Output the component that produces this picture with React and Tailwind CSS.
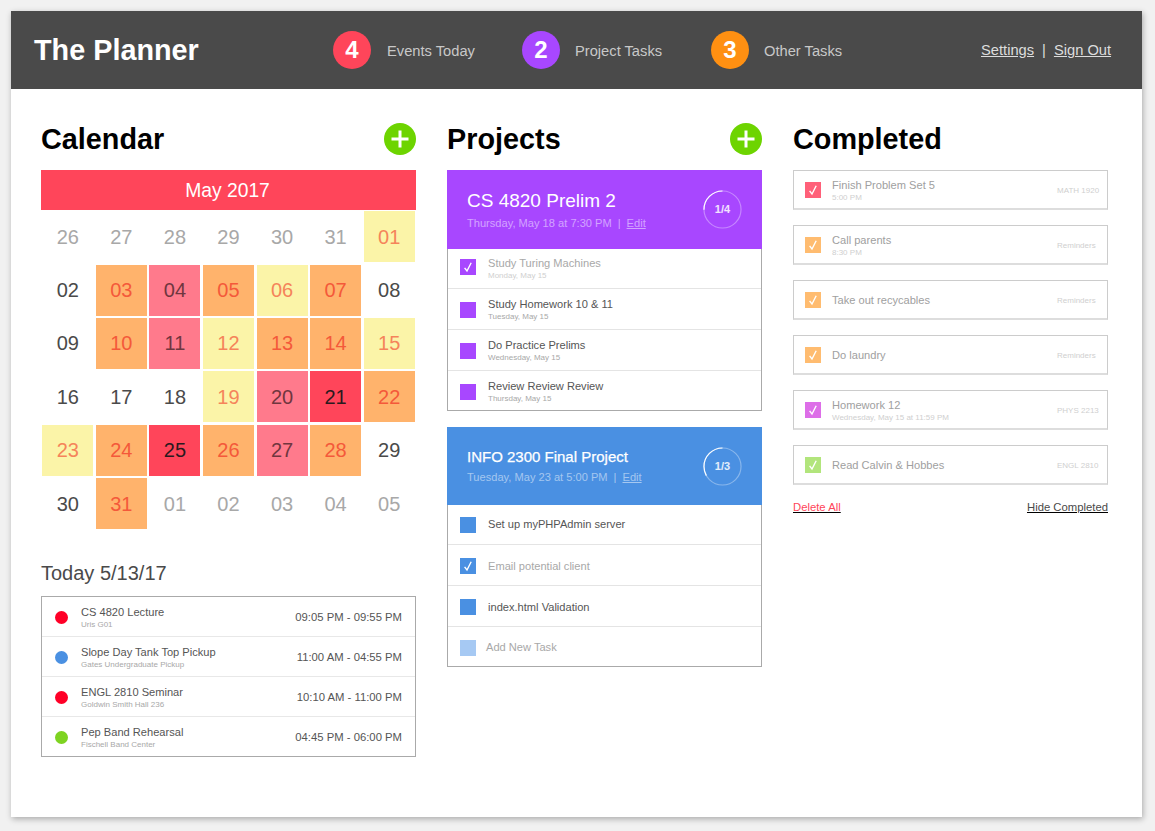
import React from "react";

const font = "font-['Liberation_Sans',Arial,sans-serif]";

const colors = {
    g: "text-[#a8a8a8]",
    n: "text-[#4a4a4a]",
    y: "bg-[#fbf4a8] text-[#f5845a]",
    o: "bg-[#ffb36c] text-[#f4593a]",
    p: "bg-[#ff7a8c] text-[#70363f]",
    r: "bg-[#ff455a] text-[#2b1a1e]",
};

const calendar = [
    ["26", "g"], ["27", "g"], ["28", "g"], ["29", "g"], ["30", "g"], ["31", "g"], ["01", "y"],
    ["02", "n"], ["03", "o"], ["04", "p"], ["05", "o"], ["06", "y"], ["07", "o"], ["08", "n"],
    ["09", "n"], ["10", "o"], ["11", "p"], ["12", "y"], ["13", "o"], ["14", "o"], ["15", "y"],
    ["16", "n"], ["17", "n"], ["18", "n"], ["19", "y"], ["20", "p"], ["21", "r"], ["22", "o"],
    ["23", "y"], ["24", "o"], ["25", "r"], ["26", "o"], ["27", "p"], ["28", "o"], ["29", "n"],
    ["30", "n"], ["31", "o"], ["01", "g"], ["02", "g"], ["03", "g"], ["04", "g"], ["05", "g"],
];

const events = [
    { title: "CS 4820 Lecture", place: "Uris G01", time: "09:05 PM - 09:55 PM", dot: "bg-[#ff0027]" },
    { title: "Slope Day Tank Top Pickup", place: "Gates Undergraduate Pickup", time: "11:00 AM - 04:55 PM", dot: "bg-[#4a90e2]" },
    { title: "ENGL 2810 Seminar", place: "Goldwin Smith Hall 236", time: "10:10 AM - 11:00 PM", dot: "bg-[#ff0027]" },
    { title: "Pep Band Rehearsal", place: "Fischell Band Center", time: "04:45 PM - 06:00 PM", dot: "bg-[#7ed321]" },
];

const completed = [
    { title: "Finish Problem Set 5", sub: "5:00 PM", tag: "MATH 1920", color: "bg-[#ff6079]" },
    { title: "Call parents", sub: "8:30 PM", tag: "Reminders", color: "bg-[#ffbc70]" },
    { title: "Take out recycables", tag: "Reminders", color: "bg-[#ffbc70]" },
    { title: "Do laundry", tag: "Reminders", color: "bg-[#ffbc70]" },
    { title: "Homework 12", sub: "Wednesday, May 15 at 11:59 PM", tag: "PHYS 2213", color: "bg-[#dd6ee8]" },
    { title: "Read Calvin & Hobbes", tag: "ENGL 2810", color: "bg-[#b2e57c]" },
];

function Check({ color, checked, className = "" }) {
    return (
        <div className={`flex h-4 w-4 shrink-0 items-center justify-center ${color} ${className}`}>
            {checked && (
                <svg width="16" height="16" viewBox="0 0 16 16" fill="none">
                    <path d="M4.6 8.8 L7 12 L11.2 3.8" stroke="white" strokeWidth="1.4" />
                </svg>
            )}
        </div>
    );
}

function Badge({ n, color, label, className }) {
    return (
        <div className={`flex items-center ${className}`}>
            <div className={`flex h-[38px] w-[38px] items-center justify-center rounded-full text-[24px] font-bold text-white ${color}`}>{n}</div>
            <span className="pt-[3px] text-[14.7px] text-[#c8c8c8]">{label}</span>
        </div>
    );
}

function PlusButton() {
    return (
        <div className="flex h-8 w-8 items-center justify-center rounded-full bg-[#6dd400]">
            <svg width="20" height="20" viewBox="0 0 20 20">
                <path d="M10 1.5 V18.5 M1.5 10 H18.5" stroke="white" strokeWidth="3" />
            </svg>
        </div>
    );
}

function Ring({ text, progress }) {
    const c = 2 * Math.PI * 19;
    return (
        <div className="relative h-[39px] w-[39px]">
            <svg width="39" height="39" viewBox="0 0 40 40" className="absolute inset-0">
                <circle cx="20" cy="20" r="19" fill="none" stroke="white" strokeOpacity="0.35" strokeWidth="1.2" />
                <circle cx="20" cy="20" r="19" fill="none" stroke="white" strokeWidth="1.2"
                    strokeDasharray={`${c * progress} ${c}`} transform="rotate(-90 20 20) scale(1 -1) translate(0 -40)" />
            </svg>
            <div className="flex h-full items-center justify-center text-[11px] font-bold text-white/85">{text}</div>
        </div>
    );
}

function ProjectCard({ title, titleClass, date, ring, progress, color, headerClass, children }) {
    return (
        <div className="border-x border-b border-[#aaaaaa]">
            <div className={`-mx-px flex items-center justify-between px-5 ${color} ${headerClass}`}>
                <div>
                    <div className={`text-white ${titleClass}`}>{title}</div>
                    <div className="mt-1 text-[11.1px] leading-[14px] text-white/50">
                        {date}<span className="mx-[6px]">|</span><span className="underline">Edit</span>
                    </div>
                </div>
                <Ring text={ring} progress={progress} />
            </div>
            {children}
        </div>
    );
}

function TaskRow({ color, title, sub, checked, top, last, checkClass }) {
    const size = top ? "h-10 border-b" : last ? "h-[39px] pt-[2px]" : "h-[41px] pt-[2px] border-b";
    return (
        <div className={`flex items-center gap-3 border-[#e4e4e4] pl-3 ${size}`}>
            <Check color={color} checked={checked} className={checkClass} />
            <div>
                <div className={`text-[11.1px] leading-[13px] ${checked ? "text-[#a8a8a8]" : "text-[#555555]"}`}>{title}</div>
                {sub && <div className={`mt-px text-[8px] leading-[10px] ${checked ? "text-[#cfcfcf]" : "text-[#a8a8a8]"}`}>{sub}</div>}
            </div>
        </div>
    );
}

export default function App() {
    return (
        <div className={`min-h-[831px] bg-[#f1f1f1] pl-[11px] pt-[11px] ${font}`}>
            <div className="h-[806px] w-[1131px] bg-white shadow-[1px_2px_6px_rgba(0,0,0,0.3)]">
                <header className="flex h-[78px] items-center bg-[#4a4a4a] pl-[23px] text-white">
                    <h1 className="w-[299px] pt-[2px] text-[28.8px] font-bold">The Planner</h1>
                    <Badge n="4" color="bg-[#ff455a]" label="Events Today" className="w-[189px] gap-4" />
                    <Badge n="2" color="bg-[#a847ff]" label="Project Tasks" className="w-[189px] gap-[15px]" />
                    <Badge n="3" color="bg-[#ff9012]" label="Other Tasks" className="w-[270px] gap-[15px]" />
                    <div className="pt-px text-[14.7px] text-[#dddddd]">
                        <span className="underline">Settings</span>
                        <span className="mx-[8px] font-light">|</span>
                        <span className="underline">Sign Out</span>
                    </div>
                </header>

                <main className="flex gap-[31px] pl-[30px] pt-[34px]">
                    <section className="w-[375px]">
                        <div className="flex h-[47px] items-start justify-between">
                            <h2 className="text-[28.8px] font-bold leading-[33px] text-black">Calendar</h2>
                            <PlusButton />
                        </div>
                        <div className="flex h-10 items-center justify-center bg-[#ff455a] pr-[2px] pt-[2px] text-[19.3px] text-white">May 2017</div>
                        <div className="grid grid-cols-7 grid-rows-[repeat(6,53.4px)]">
                            {calendar.map(([day, kind], i) => (
                                <div key={i} className={`m-[1.25px] flex items-center justify-center text-[20px] ${colors[kind]}`}>{day}</div>
                            ))}
                        </div>
                        <h3 className="mt-[31px] text-[20px] leading-[24px] text-[#4a4a4a]">Today 5/13/17</h3>
                        <div className="mt-[11px] border border-[#aaaaaa]">
                            {events.map((e, i) => (
                                <div key={i} className={`flex items-center px-[13px] pt-px ${i < 3 ? "h-10 border-b border-[#e8e8e8]" : "h-[39px]"}`}>
                                    <div className={`h-[13px] w-[13px] rounded-full ${e.dot}`} />
                                    <div className="ml-[13px] pt-[2px]">
                                        <div className="text-[11.1px] leading-[13px] text-[#555555]">{e.title}</div>
                                        <div className="mt-px text-[8px] leading-[10px] text-[#a8a8a8]">{e.place}</div>
                                    </div>
                                    <div className="ml-auto text-[11.3px] text-[#555555]">{e.time}</div>
                                </div>
                            ))}
                        </div>
                    </section>

                    <section className="w-[315px]">
                        <div className="flex h-[47px] items-start justify-between">
                            <h2 className="text-[28.8px] font-bold leading-[33px] text-black">Projects</h2>
                            <PlusButton />
                        </div>
                        <ProjectCard title="CS 4820 Prelim 2" titleClass="text-[19px] leading-[22px]" date="Thursday, May 18 at 7:30 PM" ring="1/4" progress={0.25} color="bg-[#a847ff]" headerClass="h-[79px]">
                            <TaskRow color="bg-[#a847ff]" title="Study Turing Machines" sub="Monday, May 15" checked top checkClass="-mt-[3px]" />
                            <TaskRow color="bg-[#a847ff]" title="Study Homework 10 & 11" sub="Tuesday, May 15" />
                            <TaskRow color="bg-[#a847ff]" title="Do Practice Prelims" sub="Wednesday, May 15" />
                            <TaskRow color="bg-[#a847ff]" title="Review Review Review" sub="Thursday, May 15" last />
                        </ProjectCard>
                        <div className="mt-4">
                            <ProjectCard title="INFO 2300 Final Project" titleClass="text-[15px] leading-[18px] [-webkit-text-stroke:0.25px_white]" date="Tuesday, May 23 at 5:00 PM" ring="1/3" progress={0.33} color="bg-[#4a90e2]" headerClass="h-[78px]">
                                <TaskRow color="bg-[#4a90e2]" title="Set up myPHPAdmin server" top />
                                <TaskRow color="bg-[#4a90e2]" title="Email potential client" checked />
                                <TaskRow color="bg-[#4a90e2]" title="index.html Validation" />
                                <TaskRow color="bg-[#a6c9f3]" title={<span className="-ml-0.5 text-[#a8a8a8]">Add New Task</span>} last />
                            </ProjectCard>
                        </div>
                    </section>

                    <section className="w-[315px]">
                        <div className="h-[47px]">
                            <h2 className="text-[28.8px] font-bold leading-[33px] text-black">Completed</h2>
                        </div>
                        <div className="flex flex-col gap-[15px]">
                            {completed.map((t) => (
                                <div key={t.title} className="flex h-10 items-center border border-b-2 border-[#cccccc] border-b-[#dddddd] pl-[11px] pt-px">
                                    <Check color={t.color} checked />
                                    <div className={`ml-[11px] w-[225px] ${t.sub ? "pt-px" : ""}`}>
                                        <div className="text-[11.1px] leading-[13px] text-[#a0a0a0]">{t.title}</div>
                                        {t.sub && <div className="mt-px text-[8px] leading-[10px] text-[#cfcfcf]">{t.sub}</div>}
                                    </div>
                                    <div className="pt-[2px] text-[8px] text-[#cfcfcf]">{t.tag}</div>
                                </div>
                            ))}
                        </div>
                        <div className="mt-4 flex justify-between text-[11.3px] leading-[13px] underline">
                            <span className="text-[#ff455a]">Delete All</span>
                            <span className="text-[#4a4a4a]">Hide Completed</span>
                        </div>
                    </section>
                </main>
            </div>
        </div>
    );
}
